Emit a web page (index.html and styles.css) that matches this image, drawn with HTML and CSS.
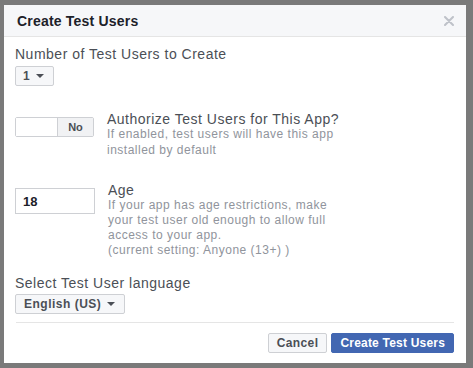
FILE: index.html
```html
<!DOCTYPE html>
<html lang="en">
<head>
  <meta charset="UTF-8">
  <title>Create Test Users</title>
  <link rel="stylesheet" href="styles.css">
</head>
<body>
  <div class="dialog">
    <div class="dialog-header">
      <h1>Create Test Users</h1>
      <svg class="close" width="10" height="10" viewBox="0 0 10 10">
        <path d="M1 1 L9 9 M9 1 L1 9" stroke="#bec2c9" stroke-width="2" stroke-linecap="round"/>
      </svg>
    </div>

    <div class="dialog-body">
      <div class="field">
        <label class="label">Number of Test Users to Create</label>
        <div class="select select-count">1 <span class="caret"></span></div>
      </div>

      <div class="row row-auth">
        <div class="toggle">
          <span class="toggle-off"></span>
          <span class="toggle-no">No</span>
        </div>
        <div class="row-text">
          <div class="label">Authorize Test Users for This App?</div>
          <div class="help help-auth">If enabled, test users will have this app<br>installed by default</div>
        </div>
      </div>

      <div class="row row-age">
        <input class="age-input" type="text" value="18">
        <div class="row-text">
          <div class="label">Age</div>
          <div class="help">If your app has age restrictions, make<br>your test user old enough to allow full<br>access to your app.<br>(current setting: Anyone (13+) )</div>
        </div>
      </div>

      <div class="field field-lang">
        <label class="label">Select Test User language</label>
        <div class="select select-lang">English (US) <span class="caret"></span></div>
      </div>
    </div>

    <div class="dialog-footer">
      <button class="btn">Cancel</button>
      <button class="btn btn-primary">Create Test Users</button>
    </div>
  </div>
</body>
</html>
```

FILE: styles.css
```css
body {
  margin: 0;
  background: #7a7a7a;
  font-family: "Liberation Sans", Arial, sans-serif;
  color: #1d2129;
  padding: 5px 7px 5px 4px;
}

.dialog {
  background: white;
  width: 462px;
  height: 358px;
}

.dialog-header {
  background: #f6f7f9;
  border-bottom: 1px solid #e5e5e5;
  height: 31px;
  display: flex;
  align-items: center;
  justify-content: space-between;
  padding: 0 12px 0 13px;
}

.dialog-header h1 {
  margin: 0;
  font-size: 14px;
  font-weight: bold;
  letter-spacing: 0.2px;
  color: #1d2129;
}

.dialog-body {
  padding: 9px 11px 0 11px;
}

.label {
  display: block;
  font-size: 14px;
  color: #4b4f56;
  line-height: 16px;
  letter-spacing: 0.5px;
}

.help {
  font-size: 12px;
  color: #90949c;
  line-height: 15px;
  letter-spacing: 0.5px;
}

.help-auth {
  line-height: 16px;
  margin-top: -1px;
}

.select {
  display: inline-flex;
  align-items: center;
  gap: 6px;
  background: #f6f7f9;
  border: 1px solid #ced0d4;
  border-radius: 2px;
  font-size: 12px;
  font-weight: bold;
  letter-spacing: 0.5px;
  color: #4b4f56;
  height: 18px;
  margin-top: 4px;
}

.select-count {
  padding: 0 9px 0 7px;
}

.caret {
  width: 0;
  height: 0;
  border-left: 4px solid transparent;
  border-right: 4px solid transparent;
  border-top: 4px solid #4b4f56;
}

.row {
  display: flex;
  gap: 13px;
}

.row-auth {
  margin-top: 25px;
}

.toggle {
  display: flex;
  width: 77px;
  height: 18px;
  border: 1px solid #ced0d4;
  border-radius: 2px;
  margin-top: 6px;
  flex-shrink: 0;
}

.toggle-off {
  width: 41px;
  background: white;
}

.toggle-no {
  flex: 1;
  background: #f1f2f4;
  border-left: 1px solid #ced0d4;
  font-size: 11px;
  font-weight: bold;
  color: #4b4f56;
  display: flex;
  align-items: center;
  justify-content: center;
}

.row-age {
  margin-top: 24px;
}

.age-input {
  width: 71px;
  height: 24px;
  border: 1px solid #ced0d4;
  padding: 0 0 0 7px;
  margin: 6px 0 0 0;
  font-family: inherit;
  font-size: 13px;
  font-weight: bold;
  color: #1d2129;
  flex-shrink: 0;
  box-sizing: content-box;
}

.field-lang {
  margin-top: 17px;
}

.select-lang {
  margin-top: 3px;
  padding: 0 9px 0 8px;
}

.dialog-footer {
  margin: 8px 12px 0 12px;
  border-top: 1px solid #e5e5e5;
  padding-top: 10px;
  display: flex;
  justify-content: flex-end;
  gap: 4px;
}

.btn {
  font-family: inherit;
  font-size: 12px;
  font-weight: bold;
  letter-spacing: 0.4px;
  height: 20px;
  padding: 0 8px;
  border: 1px solid #ced0d4;
  border-radius: 2px;
  background: #f6f7f9;
  color: #4b4f56;
}

.btn-primary {
  background: #4267b2;
  border-color: #4267b2;
  color: white;
  letter-spacing: 0.2px;
  padding: 0 8px;
}
```
